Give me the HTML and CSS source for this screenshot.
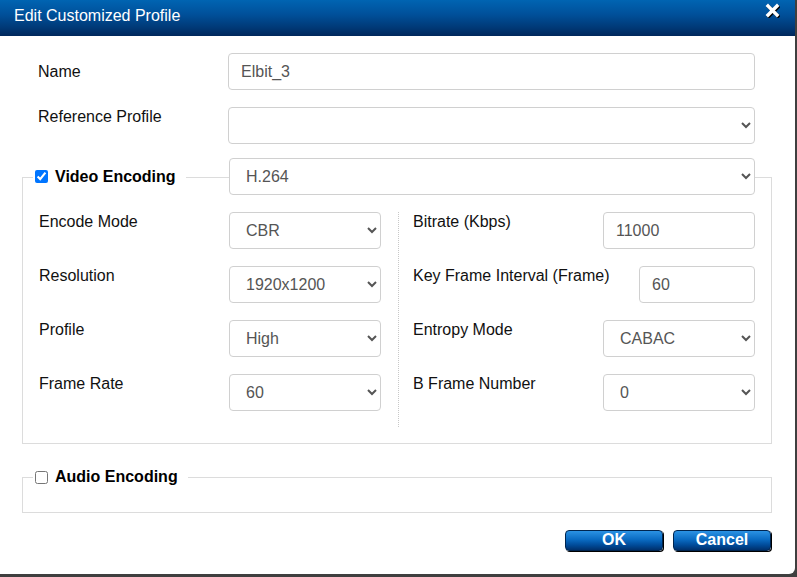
FILE: index.html
```html
<!DOCTYPE html>
<html>
<head>
<meta charset="utf-8">
<title>Edit Customized Profile</title>
<link rel="stylesheet" href="styles.css">
</head>
<body>
<div class="dialog">
  <div class="titlebar">
    <span class="title">Edit Customized Profile</span>
    <svg class="close" width="15" height="15" viewBox="0 0 15 15">
      <path d="M3 3 L12 12 M12 3 L3 12" stroke="#000" stroke-width="3.6" stroke-linecap="square" transform="translate(1 1)"/>
      <path d="M3 3 L12 12 M12 3 L3 12" stroke="#fff" stroke-width="3.4" stroke-linecap="square"/>
    </svg>
  </div>
  <div class="content">
    <div class="field-row centered">
      <label class="lbl">Name</label>
      <input class="ctl wide" type="text" value="Elbit_3">
    </div>
    <div class="field-row">
      <label class="lbl lbl-ref">Reference Profile</label>
      <select class="ctl wide"><option></option></select>
    </div>

    <div class="group video">
      <div class="group-head">
        <label class="legend"><input class="chk" type="checkbox" checked><span>Video Encoding</span></label>
        <select class="ctl codec"><option>H.264</option></select>
      </div>
      <div class="cols">
        <div class="col col-left">
          <div class="row"><span class="lbl">Encode Mode</span><select class="ctl small"><option>CBR</option></select></div>
          <div class="row"><span class="lbl">Resolution</span><select class="ctl small"><option>1920x1200</option></select></div>
          <div class="row"><span class="lbl">Profile</span><select class="ctl small"><option>High</option></select></div>
          <div class="row"><span class="lbl">Frame Rate</span><select class="ctl small"><option>60</option></select></div>
        </div>
        <div class="col col-right">
          <div class="row"><span class="lbl">Bitrate (Kbps)</span><input class="ctl small" type="text" value="11000"></div>
          <div class="row"><span class="lbl">Key Frame Interval (Frame)</span><input class="ctl narrow" type="text" value="60"></div>
          <div class="row"><span class="lbl">Entropy Mode</span><select class="ctl small"><option>CABAC</option></select></div>
          <div class="row"><span class="lbl">B Frame Number</span><select class="ctl small"><option>0</option></select></div>
        </div>
      </div>
    </div>

    <div class="group audio">
      <div class="group-head audio-head">
        <label class="legend"><input class="chk" type="checkbox"><span>Audio Encoding</span></label>
      </div>
    </div>

    <div class="buttons">
      <button class="btn" type="button">OK</button>
      <button class="btn" type="button">Cancel</button>
    </div>
  </div>
</div>
</body>
</html>
```
FILE: styles.css
```css
html, body {
  margin: 0;
  padding: 0;
}
body {
  background: #3f3f3f;
  width: 797px;
  height: 577px;
  overflow: hidden;
  font-family: "Liberation Sans", Arial, sans-serif;
  font-size: 16px;
  color: #111;
}
.dialog {
  width: 795px;
  height: 574px;
  background: #fff;
  border-bottom-right-radius: 6px;
  overflow: hidden;
}
.titlebar {
  height: 36px;
  background: linear-gradient(to bottom, #0064b2 0%, #00509a 40%, #003a78 75%, #00285c 100%);
  display: flex;
  justify-content: space-between;
  align-items: flex-start;
  padding: 0 15px 0 14px;
  box-sizing: border-box;
}
.title {
  color: #fff;
  font-size: 16px;
  line-height: 31px;
}
.close {
  margin-top: 3px;
  display: block;
}
.content {
  padding: 17px 23px 0 22px;
}
.field-row {
  display: flex;
  align-items: flex-start;
  padding-left: 16px;
  margin-bottom: 17px;
}
.field-row.centered {
  align-items: center;
}
.lbl {
  width: 190px;
  flex: none;
  line-height: 18px;
  color: #111;
}
.lbl-ref {
  padding-top: 1px;
}
.row .lbl {
  padding-top: 1px;
}
.ctl {
  box-sizing: border-box;
  height: 37px;
  border: 1px solid #d0d0d0;
  border-radius: 4px;
  background: #fff;
  color: #555;
  font-family: "Liberation Sans", Arial, sans-serif;
  font-size: 16px;
  padding: 6px 12px;
  margin: 0;
  outline: none;
}
select.ctl {
  padding-left: 12px;
}
.wide {
  width: 527px;
}
.group {
  border: 1px solid #dcdcdc;
}
.video {
  margin-top: 33px;
}
.group-head {
  display: flex;
  align-items: center;
  height: 37px;
  margin-top: -20px;
}
.legend {
  display: flex;
  align-items: center;
  background: #fff;
  margin-left: 10px;
  padding: 0 10px 0 2px;
  font-weight: bold;
  color: #000;
  line-height: 18px;
}
.chk {
  width: 13px;
  height: 13px;
  margin: 0 7px 0 0;
}
.codec {
  width: 526px;
  margin-left: auto;
  margin-right: 16px;
}
.cols {
  display: flex;
  padding: 17px 0 16px 16px;
}
.col {
  display: flex;
  flex-direction: column;
  gap: 17px;
  padding-bottom: 16px;
}
.col-left {
  width: 359px;
  flex: none;
}
.col-right {
  flex: 1;
  border-left: 1px dotted #c8c8c8;
  padding-left: 14px;
  padding-right: 16px;
}
.row {
  display: flex;
  align-items: flex-start;
  height: 37px;
}
.col-right .row {
  justify-content: space-between;
}
.col-right .lbl {
  width: auto;
}
.small {
  width: 152px;
}
.narrow {
  width: 116px;
}
.audio {
  margin-top: 33px;
  height: 36px;
  box-sizing: border-box;
}
.audio-head {
  height: 20px;
  margin-top: -11px;
}
.buttons {
  display: flex;
  justify-content: flex-end;
  gap: 10px;
  margin-top: 17px;
  padding-right: 1px;
}
.btn {
  width: 98px;
  height: 21px;
  padding: 0 0 2px;
  border: 1px solid #00254f;
  border-radius: 4px;
  background: linear-gradient(to bottom, #2b92e4 0%, #0a6bc2 45%, #004a98 75%, #00306c 100%);
  box-shadow: 1px 1px 0 #000;
  color: #fff;
  font-family: "Liberation Sans", Arial, sans-serif;
  font-weight: bold;
  font-size: 16px;
  line-height: 17px;
}
```
